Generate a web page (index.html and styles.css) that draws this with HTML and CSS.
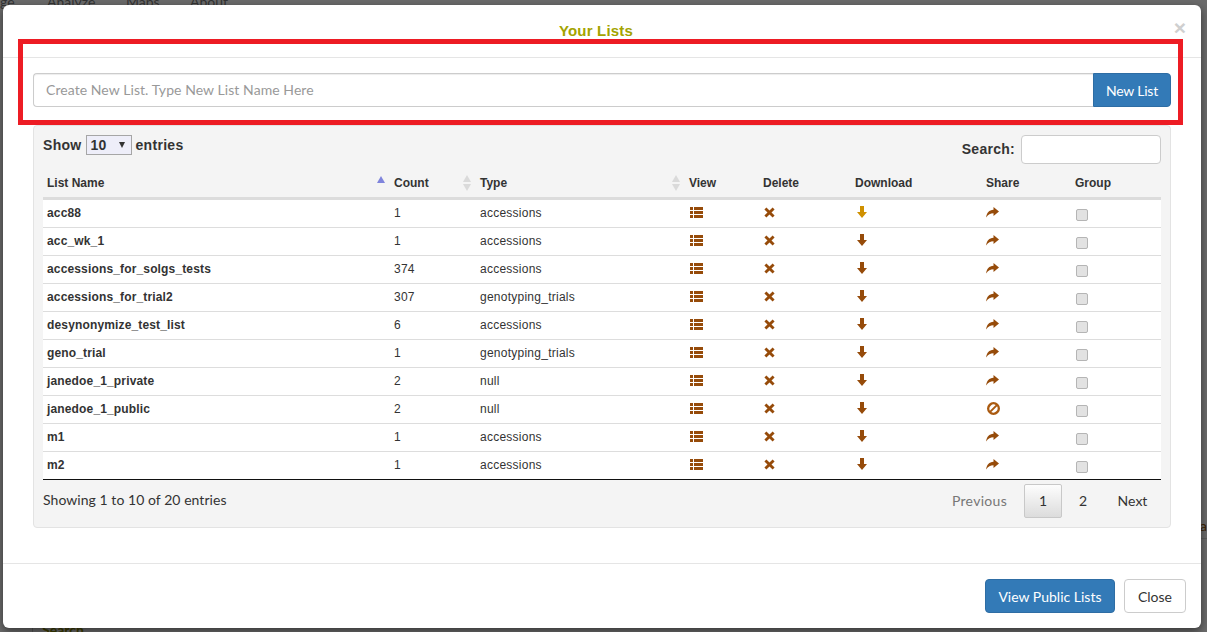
FILE: index.html
```html
<!DOCTYPE html>
<html lang="en">
  <head>
    <meta charset="UTF-8" />
    <title>Your Lists</title>
    <link rel="stylesheet" href="styles.css">
  </head>
  <body>
    <svg class="iconDefs" width="0" height="0">
      <symbol id="i-list" viewBox="0 0 13 11">
        <path d="M0 0h3v3H0zM4 0h9v3H4zM0 4h3v3H0zM4 4h9v3H4zM0 8h3v3H0zM4 8h9v3H4z" />
      </symbol>
      <symbol id="i-remove" viewBox="0 0 11 11">
        <path d="M2.4.4 5.5 3.5 8.6.4l2 2-3.100 3.100 3.100 3.100-2 2-3.100-3.100-3.100 3.100-2-2 3.100-3.100L.4 2.400z" />
      </symbol>
      <symbol id="i-down" viewBox="0 0 10 12">
        <path d="M3 0h4v6h3L5 12 0 6h3z" />
      </symbol>
      <symbol id="i-share" viewBox="0 0 13 11">
        <path d="M7.500 0 13 4.500 7.500 9V6.200C4.500 6.200 2 7.300.2 10.500.5 6 3.200 3 7.500 2.800z" />
      </symbol>
      <symbol id="i-ban" viewBox="0 0 13 13">
        <path fill-rule="evenodd" d="M6.500 0a6.500 6.500 0 1 0 0 13 6.500 6.500 0 0 0 0-13zM2.900 8.700A4.300 4.300 0 0 1 8.700 2.900zM4.300 10.100l5.800-5.800a4.300 4.300 0 0 1-5.800 5.800z" />
      </symbol>
    </svg>

    <!-- page behind the modal -->
    <div class="behind">
      <span class="navItem">ge</span>
      <span class="navItem navAnalyze">Analyze</span>
      <span class="navItem navMaps">Maps</span>
      <span class="navItem navAbout">About</span>
      <span class="behindSearch">Search</span>
      <span class="behindEdge">al</span>
      <i class="behindLine"></i>
      <i class="behindRule"></i>
    </div>

    <div class="modal">
      <div class="modalHeader">
        <h4>Your Lists</h4>
        <span class="closeX">&times;</span>
      </div>

      <div class="modalBody">
        <div class="inputGroup">
          <input type="text" class="newListInput" placeholder="Create New List. Type New List Name Here" />
          <button class="btnPrimary newListBtn">New List</button>
        </div>

        <div class="panel">
          <div class="panelTop">
            <div class="lengthBox">
              Show
              <span class="fakeSelect">10<i class="selectArrow"></i></span>
              entries
            </div>
            <div class="searchBox">
              <label>Search:</label>
              <input type="text" />
            </div>
          </div>

          <table class="listTable">
            <colgroup>
              <col class="c1" /><col class="c2" /><col class="c3" /><col class="c4" />
              <col class="c5" /><col class="c6" /><col class="c7" /><col class="c8" />
            </colgroup>
            <thead>
              <tr>
                <th>List Name<i class="sort sortAsc"></i></th>
                <th>Count<i class="sort sortBoth"></i></th>
                <th>Type<i class="sort sortBoth"></i></th>
                <th>View</th>
                <th>Delete</th>
                <th>Download</th>
                <th>Share</th>
                <th>Group</th>
              </tr>
            </thead>
            <tbody>
              <tr>
                <td class="name">acc88</td><td>1</td><td>accessions</td>
                <td><svg class="ico icoList"><use href="#i-list" /></svg></td>
                <td><svg class="ico icoRemove"><use href="#i-remove" /></svg></td>
                <td><svg class="ico icoDown hot"><use href="#i-down" /></svg></td>
                <td><svg class="ico icoShare"><use href="#i-share" /></svg></td>
                <td><input type="checkbox" class="chk" /></td>
              </tr>
              <tr>
                <td class="name">acc_wk_1</td><td>1</td><td>accessions</td>
                <td><svg class="ico icoList"><use href="#i-list" /></svg></td>
                <td><svg class="ico icoRemove"><use href="#i-remove" /></svg></td>
                <td><svg class="ico icoDown"><use href="#i-down" /></svg></td>
                <td><svg class="ico icoShare"><use href="#i-share" /></svg></td>
                <td><input type="checkbox" class="chk" /></td>
              </tr>
              <tr>
                <td class="name">accessions_for_solgs_tests</td><td>374</td><td>accessions</td>
                <td><svg class="ico icoList"><use href="#i-list" /></svg></td>
                <td><svg class="ico icoRemove"><use href="#i-remove" /></svg></td>
                <td><svg class="ico icoDown"><use href="#i-down" /></svg></td>
                <td><svg class="ico icoShare"><use href="#i-share" /></svg></td>
                <td><input type="checkbox" class="chk" /></td>
              </tr>
              <tr>
                <td class="name">accessions_for_trial2</td><td>307</td><td>genotyping_trials</td>
                <td><svg class="ico icoList"><use href="#i-list" /></svg></td>
                <td><svg class="ico icoRemove"><use href="#i-remove" /></svg></td>
                <td><svg class="ico icoDown"><use href="#i-down" /></svg></td>
                <td><svg class="ico icoShare"><use href="#i-share" /></svg></td>
                <td><input type="checkbox" class="chk" /></td>
              </tr>
              <tr>
                <td class="name">desynonymize_test_list</td><td>6</td><td>accessions</td>
                <td><svg class="ico icoList"><use href="#i-list" /></svg></td>
                <td><svg class="ico icoRemove"><use href="#i-remove" /></svg></td>
                <td><svg class="ico icoDown"><use href="#i-down" /></svg></td>
                <td><svg class="ico icoShare"><use href="#i-share" /></svg></td>
                <td><input type="checkbox" class="chk" /></td>
              </tr>
              <tr>
                <td class="name">geno_trial</td><td>1</td><td>genotyping_trials</td>
                <td><svg class="ico icoList"><use href="#i-list" /></svg></td>
                <td><svg class="ico icoRemove"><use href="#i-remove" /></svg></td>
                <td><svg class="ico icoDown"><use href="#i-down" /></svg></td>
                <td><svg class="ico icoShare"><use href="#i-share" /></svg></td>
                <td><input type="checkbox" class="chk" /></td>
              </tr>
              <tr>
                <td class="name">janedoe_1_private</td><td>2</td><td>null</td>
                <td><svg class="ico icoList"><use href="#i-list" /></svg></td>
                <td><svg class="ico icoRemove"><use href="#i-remove" /></svg></td>
                <td><svg class="ico icoDown"><use href="#i-down" /></svg></td>
                <td><svg class="ico icoShare"><use href="#i-share" /></svg></td>
                <td><input type="checkbox" class="chk" /></td>
              </tr>
              <tr>
                <td class="name">janedoe_1_public</td><td>2</td><td>null</td>
                <td><svg class="ico icoList"><use href="#i-list" /></svg></td>
                <td><svg class="ico icoRemove"><use href="#i-remove" /></svg></td>
                <td><svg class="ico icoDown"><use href="#i-down" /></svg></td>
                <td><svg class="ico icoBan"><use href="#i-ban" /></svg></td>
                <td><input type="checkbox" class="chk" /></td>
              </tr>
              <tr>
                <td class="name">m1</td><td>1</td><td>accessions</td>
                <td><svg class="ico icoList"><use href="#i-list" /></svg></td>
                <td><svg class="ico icoRemove"><use href="#i-remove" /></svg></td>
                <td><svg class="ico icoDown"><use href="#i-down" /></svg></td>
                <td><svg class="ico icoShare"><use href="#i-share" /></svg></td>
                <td><input type="checkbox" class="chk" /></td>
              </tr>
              <tr>
                <td class="name">m2</td><td>1</td><td>accessions</td>
                <td><svg class="ico icoList"><use href="#i-list" /></svg></td>
                <td><svg class="ico icoRemove"><use href="#i-remove" /></svg></td>
                <td><svg class="ico icoDown"><use href="#i-down" /></svg></td>
                <td><svg class="ico icoShare"><use href="#i-share" /></svg></td>
                <td><input type="checkbox" class="chk" /></td>
              </tr>
            </tbody>
          </table>

          <div class="panelBottom">
            <div class="info">Showing 1 to 10 of 20 entries</div>
            <div class="pager">
              <span class="pageBtn pagePrev">Previous</span>
              <span class="pageBtn pageNum pageNow">1</span>
              <span class="pageBtn pageNum">2</span>
              <span class="pageBtn pageNext">Next</span>
            </div>
          </div>
        </div>
      </div>

      <div class="modalFooter">
        <button class="btnPrimary publicBtn">View Public Lists</button>
        <button class="btnDefault">Close</button>
      </div>
    </div>

    <!-- red annotation box drawn on the screenshot -->
    <div class="redBox"></div>
  </body>
</html>
```

FILE: styles.css
```css
* {
  margin: 0;
  padding: 0;
  box-sizing: border-box;
}

html,
body {
  height: 632px;
  overflow: hidden;
}

body {
  position: relative;
  padding: 5px 6px 4px 3px;
  font-family: Lato, Arial, sans-serif;
  font-size: 14px;
  color: #333;
  background-color: #6b6b6b;
}

.iconDefs {
  position: absolute;
}

/* page behind */
.behind {
  position: absolute;
  inset: 0;
  color: #333;
  font-size: 14px;
}

.navItem {
  position: absolute;
  top: -7px;
  left: 0;
}

.navAnalyze {
  left: 47px;
}

.navMaps {
  left: 126px;
}

.navAbout {
  left: 190px;
}

.behindSearch {
  position: absolute;
  left: 42px;
  top: 621px;
  color: #3d3d00;
  font-weight: bold;
}

.behindEdge {
  position: absolute;
  left: 1200px;
  top: 517px;
  color: #3a2000;
}

.behindLine {
  position: absolute;
  left: 32px;
  top: 620px;
  width: 1px;
  height: 12px;
  background-color: #555;
}

.behindRule {
  position: absolute;
  left: 1200px;
  top: 538px;
  width: 7px;
  height: 1px;
  background-color: #5c5c5c;
}

/* modal */
.modal {
  position: relative;
  display: flex;
  flex-direction: column;
  height: 623px;
  background-color: #fff;
  border-radius: 6px;
  box-shadow: 0 3px 9px rgba(0, 0, 0, 0.5);
}

.modalHeader {
  position: relative;
  height: 53px;
  padding: 17px 12px 0 0;
  text-align: center;
  border-bottom: 1px solid #e5e5e5;
}

.modalHeader h4 {
  font-family: "Liberation Sans", Arial, sans-serif;
  font-size: 15px;
  line-height: 18px;
  letter-spacing: 0.2px;
  color: #a3a300;
  font-weight: bold;
}

.closeX {
  position: absolute;
  right: 15px;
  top: 12px;
  font-family: "Liberation Sans", Arial, sans-serif;
  font-size: 21px;
  line-height: 21px;
  font-weight: bold;
  color: #cfcfcf;
}

.modalBody {
  flex: 1;
  padding: 15px 30px 0 30px;
}

.inputGroup {
  display: flex;
  height: 34px;
  margin-bottom: 18px;
}

.newListInput {
  flex: 1;
  height: 34px;
  padding: 0 12px 1px;
  font-family: Lato, Arial, sans-serif;
  font-size: 14px;
  letter-spacing: 0.07px;
  border: 1px solid #ccc;
  border-right: none;
  border-radius: 4px 0 0 4px;
  box-shadow: inset 0 1px 1px rgba(0, 0, 0, 0.075);
}

.newListInput::placeholder {
  color: #999;
}

.btnPrimary,
.btnDefault {
  height: 34px;
  padding: 0 13px;
  font-family: Lato, Arial, sans-serif;
  font-size: 14px;
  white-space: nowrap;
  border: 1px solid #2e6da4;
  border-radius: 4px;
  color: #fff;
  background-color: #337ab7;
}

.newListBtn {
  width: 78px;
  padding: 0;
  letter-spacing: -0.2px;
  border-radius: 0 4px 4px 0;
}

.publicBtn {
  width: 130px;
  padding: 0;
}

.btnDefault {
  margin-left: 9px;
  color: #333;
  background-color: #fff;
  border-color: #ccc;
}

/* panel */
.panel {
  height: 403px;
  padding: 9px 9px 0 9px;
  background-color: #f4f4f4;
  border: 1px solid #e3e3e3;
  border-radius: 4px;
}

.panelTop {
  display: flex;
  justify-content: space-between;
  height: 29px;
  font-family: "Liberation Sans", Arial, sans-serif;
  font-weight: bold;
}

.lengthBox {
  display: flex;
  align-items: flex-start;
  gap: 4px;
  line-height: 20px;
  letter-spacing: 0.3px;
}

.fakeSelect {
  position: relative;
  display: block;
  width: 46px;
  height: 20px;
  padding-left: 4px;
  font-size: 14px;
  line-height: 18px;
  background-color: #eeeef9;
  border: 1px solid #a6a6a6;
}

.selectArrow {
  position: absolute;
  right: 6px;
  top: 6px;
  border-left: 3.5px solid transparent;
  border-right: 3.5px solid transparent;
  border-top: 6px solid #333;
}

.searchBox {
  display: flex;
  align-items: center;
  gap: 6px;
  letter-spacing: 0.27px;
  padding-bottom: 1px;
}

.searchBox input {
  width: 140px;
  height: 29px;
  margin-bottom: -1px;
  border: 1px solid #ccc;
  border-radius: 4px;
}

/* table */
.listTable {
  width: 1118px;
  margin-top: 6px;
  table-layout: fixed;
  border-collapse: separate;
  border-spacing: 0;
  font-family: "Liberation Sans", Arial, sans-serif;
  font-size: 12px;
}

.c1 { width: 347px; }
.c2 { width: 86px; }
.c3 { width: 209px; }
.c4 { width: 74px; }
.c5 { width: 92px; }
.c6 { width: 131px; }
.c7 { width: 89px; }
.c8 { width: 90px; }

.listTable th {
  position: relative;
  height: 30px;
  padding: 0 4px 2px;
  text-align: left;
  font-weight: bold;
  border-bottom: 3px solid #dcdcdc;
}

.listTable td {
  height: 28px;
  padding: 0 4px 2px;
  background-color: #fff;
  border-bottom: 1px solid #ddd;
  color: #333;
  letter-spacing: 0.25px;
}

.listTable tbody tr:last-child td {
  border-bottom-color: #111;
}

.listTable td.name {
  font-weight: bold;
  letter-spacing: 0.15px;
}

/* sort arrows */
.sort {
  position: absolute;
  right: 5px;
  top: 6px;
}

.sortAsc {
  border-left: 4.5px solid transparent;
  border-right: 4.5px solid transparent;
  border-bottom: 7px solid #7f84dc;
}

.sortBoth {
  top: 5px;
  border-left: 4.5px solid transparent;
  border-right: 4.5px solid transparent;
  border-bottom: 7px solid #dadada;
}

.sortBoth::after {
  content: "";
  position: absolute;
  left: -4.500px;
  top: 9px;
  border-left: 4.5px solid transparent;
  border-right: 4.5px solid transparent;
  border-top: 7px solid #dadada;
}

/* icons */
.ico {
  display: block;
  fill: #964b0a;
  margin-top: -1px;
}

.icoList {
  width: 13px;
  height: 11px;
  margin-left: 1px;
}

.icoRemove {
  width: 11px;
  height: 11px;
  margin-left: 1px;
}

.icoDown {
  width: 10px;
  height: 12px;
  margin-left: 2px;
}

.icoDown.hot {
  fill: #cf9000;
}

.icoShare {
  width: 13px;
  height: 11px;
}

.icoBan {
  width: 13px;
  height: 13px;
  margin-left: 1px;
  fill: #aa5a10;
}

.chk {
  display: block;
  appearance: none;
  width: 12px;
  height: 12px;
  margin: 5px 0 0 1px;
  background-color: #e2e2e2;
  border: 1px solid #b5b5b5;
  border-radius: 2px;
}

/* bottom row */
.panelBottom {
  display: flex;
  justify-content: space-between;
  height: 48px;
  padding-top: 4px;
}

.info {
  padding-top: 7px;
  font-size: 14px;
  letter-spacing: 0.05px;
}

.pager {
  display: flex;
  align-items: flex-start;
}

.pageBtn {
  display: block;
  height: 34px;
  line-height: 32px;
  font-size: 14px;
  margin-left: 2px;
  text-align: center;
  border: 1px solid transparent;
  border-radius: 2px;
}

.pagePrev {
  width: 85px;
  letter-spacing: 0.3px;
  color: #777;
}

.pageNext {
  width: 57px;
}

.pageNum {
  width: 38px;
}

.pageNow {
  border-color: #c8c8c8;
  background: linear-gradient(to bottom, #fdfdfd, #dcdcdc);
}

.modalFooter {
  display: flex;
  justify-content: flex-end;
  height: 65px;
  padding: 15px 15px 0 0;
  border-top: 1px solid #e5e5e5;
}

/* annotation */
.redBox {
  position: absolute;
  left: 18px;
  top: 39px;
  width: 1165px;
  height: 86px;
  border: 5px solid #ed1c24;
}
```
